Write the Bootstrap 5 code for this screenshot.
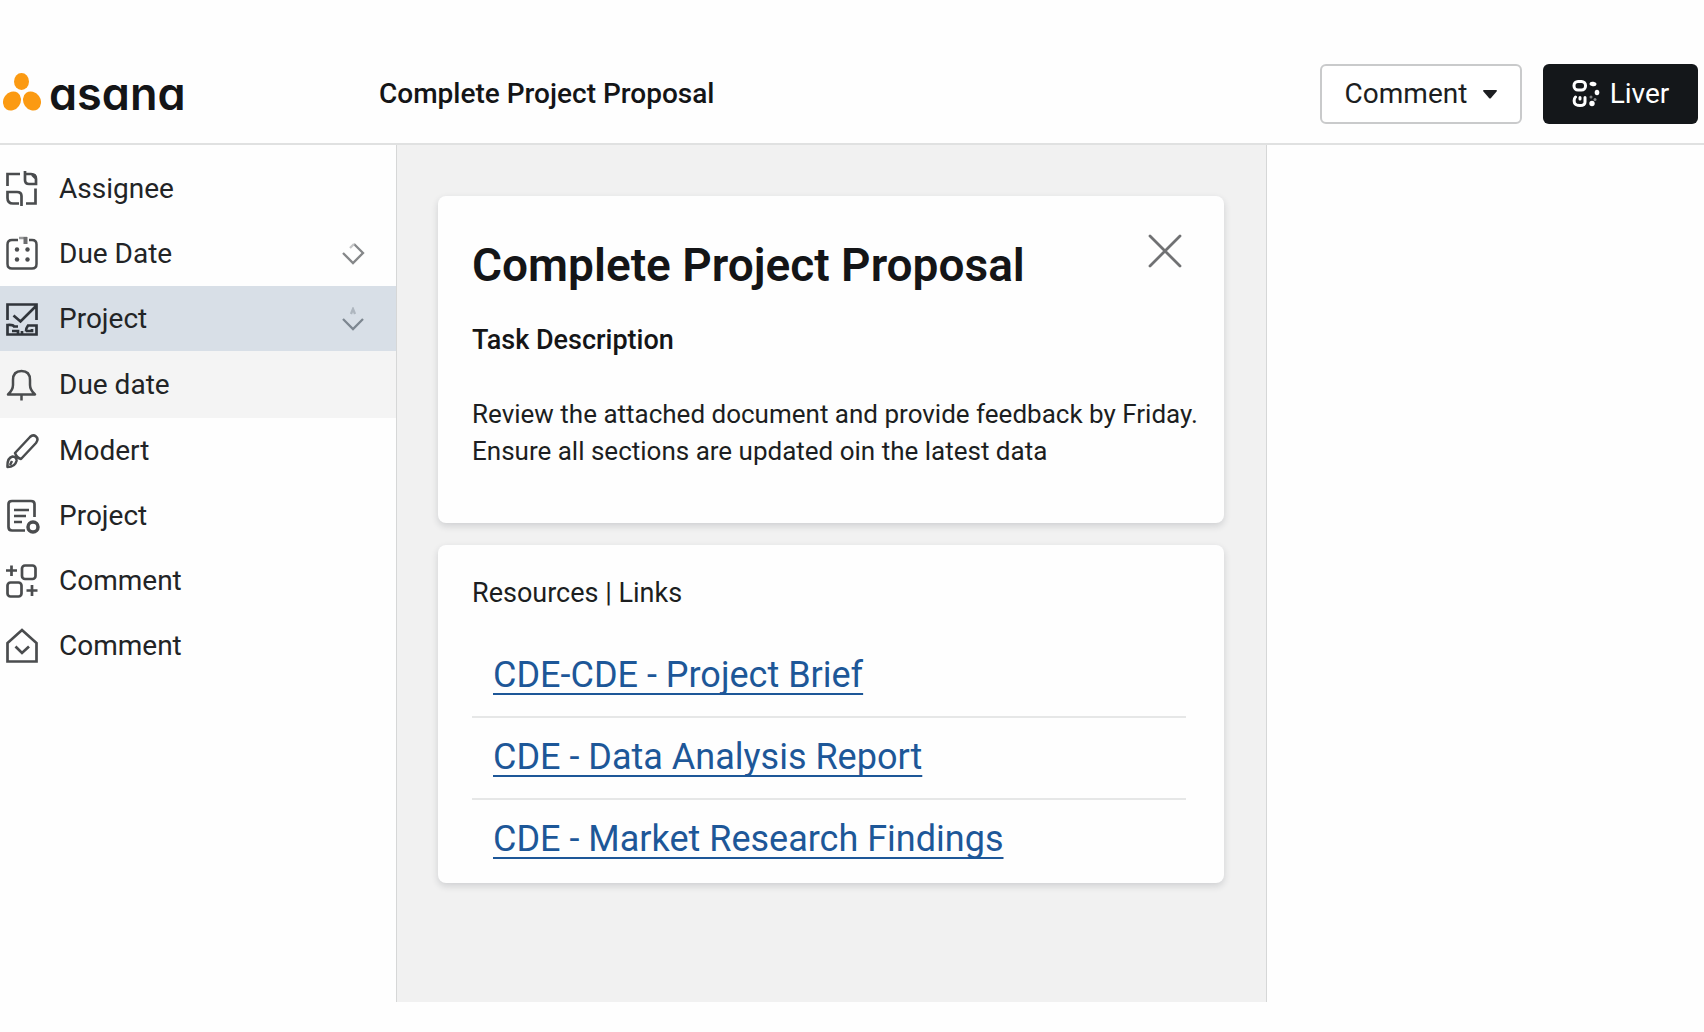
<!DOCTYPE html>
<html lang="en">
<head>
<meta charset="utf-8">
<meta name="viewport" content="width=device-width, initial-scale=1">
<title>Complete Project Proposal</title>
<link href="https://cdn.jsdelivr.net/npm/bootstrap@5.3.0/dist/css/bootstrap.min.css" rel="stylesheet">
<style>
  body { font-family: Roboto, "Liberation Sans", sans-serif; color: #1c1e21; background: #fefefe; }
  .shell { display: grid; grid-template-columns: minmax(0, 397fr) minmax(0, 870fr) minmax(0, 437fr); }
  .topbar { padding-top: 45px; border-bottom: 2px solid #e0e1e1; }
  .topbar-inner { height: 98px; }
  .brand { color: #141517; font: 600 45px/56px Inter, sans-serif; font-feature-settings: "cv11"; gap: 8px; padding-left: 3px; width: 379px; }
  .brand svg { margin-bottom: 4px; }
  .page-name { font-size: 28px; line-height: 36px; font-weight: 500; color: #141517; }
  .actions { gap: 21px; padding-right: 6px; }
  .action { height: 60px; font-size: 28px; line-height: 36px; border-radius: 6px; }
  .action-light { width: 202px; background: #fff; border: 2px solid #c9cacb; color: #1c1e21; }
  .action-dark { width: 155px; background: #14171a; color: #fff; }
  .side-nav { padding-top: 11px; border-right: 1px solid #d6d7d7; }
  .side-link { height: 65px; padding: 0 31px 0 5px; gap: 20px; font-size: 28px; line-height: 36px; color: #222426; text-decoration: none; }
  .side-link svg { flex: none; color: #4a4c4e; }
  .side-link.is-current { background: #d8dfe7; }
  .side-link.is-hovered { background: #f4f4f4; height: 67px; }
  .work { background: #f1f1f1; border-right: 1px solid #d6d7d7; padding: 51px 42px 50px 41px; min-height: calc(100vh - 175px); }
  .panel { background: #fefefe; border: 0; border-radius: 8px; box-shadow: 0 3px 7px rgba(30, 40, 50, .16); }
  .panel-task { padding: 41px 0 53px 34px; margin-bottom: 22px; }
  .panel-title { font-size: 46px; line-height: 56px; font-weight: 600; color: #141517; }
  .panel-sub { font-size: 27px; line-height: 36px; font-weight: 500; margin: 29px 0 38px; color: #141517; }
  .panel-copy { font-size: 26px; line-height: 37px; }
  .close-x { width: 36px; height: 36px; margin: -4px 41px 0 0; color: #707173; }
  .panel-links { padding: 30px 38px 1px 34px; }
  .links-head { font-size: 27px; line-height: 36px; font-weight: 400; margin-bottom: 25px; }
  .res-row { height: 82px; padding: 0 0 2px 21px; border-bottom: 2px solid #e6e7e7; }
  .res-row:last-child { border-bottom-color: transparent; }
  .res-row a { font-size: 36px; line-height: 44px; color: #1d5798; text-decoration: underline; text-decoration-thickness: 2px; text-underline-offset: 6px; text-decoration-skip-ink: none; }
</style>
<script src="https://cdn.jsdelivr.net/npm/bootstrap@5.3.0/dist/js/bootstrap.bundle.min.js"></script>
</head>
<body>
<header class="topbar">
  <div class="topbar-inner d-flex align-items-center">
    <a class="brand d-flex align-items-center text-decoration-none" href="#">
      <svg width="38" height="38" viewBox="0 0 38 38" fill="#fb9a12" aria-hidden="true">
        <ellipse cx="18.500" cy="8.500" rx="7.500" ry="8.500"/>
        <ellipse cx="9" cy="28" rx="8.500" ry="10" transform="rotate(35 9 28)"/>
        <ellipse cx="29" cy="28" rx="8.500" ry="10" transform="rotate(-35 29 28)"/>
      </svg>
      <span>asana</span>
    </a>
    <div class="page-name">Complete Project Proposal</div>
    <div class="actions d-flex ms-auto">
      <button type="button" class="btn action action-light d-flex align-items-center justify-content-center p-0">Comment
        <svg class="ms-3" width="14" height="9" viewBox="0 0 14 9" aria-hidden="true"><path d="M0 1Q0 0 1 0H13Q14 0 14 1L8 8Q7 9 6 8Z" fill="currentColor"/></svg>
      </button>
      <button type="button" class="btn action action-dark d-flex align-items-center justify-content-center p-0">
        <svg class="me-2" width="30" height="30" viewBox="0 0 30 30" fill="none" stroke="currentColor" stroke-width="3" aria-hidden="true">
          <rect x="2" y="2.500" width="11.500" height="8.500" rx="4"/>
          <path d="M3.500 18Q1.500 20 2.500 24Q3.500 26.500 8 26.500Q13 26.500 13 23V18.500M8 18.500V20" stroke-linecap="round"/>
          <g fill="currentColor" stroke="none"><ellipse cx="21" cy="5" rx="3.500" ry="2.200" transform="rotate(10 21 5)"/><ellipse cx="25" cy="13.500" rx="2.300" ry="2.700"/><circle cx="19" cy="18" r="1.500" opacity=".45"/><circle cx="20" cy="24.500" r="2.700"/><circle cx="23" cy="20.500" r="1.500" opacity=".5"/></g>
        </svg>Liver
      </button>
    </div>
  </div>
</header>

<div class="shell">
  <nav class="side-nav" aria-label="Task fields">
    <a class="side-link d-flex align-items-center" href="#">
      <svg width="34" height="36" viewBox="0 0 34 36" fill="none" stroke="currentColor" stroke-width="2.700" aria-hidden="true">
        <path d="M2.500 15V3H15M20 0V9Q20 13 24 13H31V8Q31 3 26 3H20M27 3.500L30.500 7M30.500 17.500V32.500H21M16.500 35V25Q16.500 21 12 21H2.500V27Q2.500 32.500 8 32.500H14"/>
      </svg>Assignee</a>
    <a class="side-link d-flex align-items-center" href="#">
      <svg width="34" height="36" viewBox="0 0 34 36" fill="none" stroke="currentColor" stroke-width="2.500" aria-hidden="true">
        <path d="M13 4H7Q2.500 4 2.500 8.500V28Q2.500 32.500 7 32.500H27Q31.500 32.500 31.500 28V8.500Q31.500 4 27 4H24"/><path d="M14 2H22" stroke="#98999a"/><path d="M20.500 1V8" stroke-width="4" stroke="#6c6d6f"/>
        <g fill="currentColor" stroke="none"><circle cx="12" cy="13.500" r="2.200"/><circle cx="22.500" cy="13.500" r="2.200"/><circle cx="12" cy="23.500" r="2.200"/><circle cx="22.500" cy="23.500" r="2.200"/></g>
      </svg>Due Date
      <svg class="ms-auto" width="24" height="24" viewBox="0 0 24 24" fill="none" stroke="#858789" stroke-width="2.300" aria-hidden="true"><path d="M2 11L12 21L22 11L13 2"/><path d="M13 2L9 6" stroke="#c4c5c6"/></svg></a>
    <a class="side-link is-current d-flex align-items-center" href="#" aria-current="page">
      <svg width="34" height="36" viewBox="0 0 34 36" fill="none" stroke="#30353b" stroke-width="2.700" aria-hidden="true">
        <path d="M2.500 19V3.500H31.500V19M8.500 14.500L15.500 20.500L31 5M13 25.500H9Q8 23.500 2.500 24V33.500H31.500V24.500H23Q21 27 21 30.500M7 30H13V33M17 30V33M21 30H27V28"/>
      </svg>Project
      <svg class="ms-auto" width="24" height="24" viewBox="0 0 24 24" fill="none" stroke="#7d8791" stroke-width="2.300" aria-hidden="true"><path d="M2 12L12 22L22 12"/><path d="M10 7L12 2L14 7" stroke="#aeb6bf"/></svg></a>
    <a class="side-link is-hovered d-flex align-items-center" href="#">
      <svg width="34" height="36" viewBox="0 0 34 36" fill="none" stroke="currentColor" stroke-width="2.500" stroke-linejoin="round" aria-hidden="true">
        <path d="M3 27.500Q8 23 8 18V13Q8 4 16.500 4T25 13V18Q25 23 30 27.500ZM16.500 28V33.500"/>
      </svg>Due date</a>
    <a class="side-link d-flex align-items-center" href="#">
      <svg width="34" height="36" viewBox="0 0 34 36" fill="none" stroke="currentColor" stroke-width="2.500" stroke-linejoin="round" aria-hidden="true">
        <path d="M10 20L25 4Q28 1 31 3.500Q34 6 31 10L16 26Q12 25 10 20ZM2.500 34Q2 25 7.500 23.500Q12 24 11.500 28Q10 34 2.500 34ZM5 32L7 28"/>
      </svg>Modert</a>
    <a class="side-link d-flex align-items-center" href="#">
      <svg width="34" height="36" viewBox="0 0 34 36" fill="none" stroke="currentColor" stroke-width="2.700" overflow="visible" aria-hidden="true">
        <path d="M20 32.500H7Q3.500 32.500 3.500 29V6Q3.500 3 7 3H26Q29.500 3 29.500 6V19M9 12H24M9 18H21M9 24H17"/><circle cx="28" cy="29" r="5" stroke-width="3.500"/>
      </svg>Project</a>
    <a class="side-link d-flex align-items-center" href="#">
      <svg width="34" height="36" viewBox="0 0 34 36" fill="none" stroke="currentColor" stroke-width="2.700" aria-hidden="true">
        <rect x="17" y="2.500" width="13.500" height="13.500" rx="3"/><rect x="2.500" y="19.500" width="14" height="14" rx="3"/>
        <path d="M6.500 2.500V13M1 7.500H12M27 22V33M21.500 27.500H32.500"/>
      </svg>Comment</a>
    <a class="side-link d-flex align-items-center" href="#">
      <svg width="34" height="36" viewBox="0 0 34 36" fill="none" stroke="currentColor" stroke-width="2.700" aria-hidden="true">
        <path d="M2.500 33.500V15L17 2L31.500 15V33.500ZM10.500 18.500L17 25L24 18.500"/>
      </svg>Comment</a>
  </nav>

  <main class="work">
    <section class="card panel panel-task">
      <div class="d-flex justify-content-between">
        <h1 class="panel-title mb-0">Complete Project Proposal</h1>
        <button type="button" class="close-x btn p-0 border-0 d-flex" aria-label="Close">
          <svg width="36" height="36" viewBox="0 0 36 36" fill="none" stroke="currentColor" stroke-width="2.800" stroke-linecap="round" aria-hidden="true"><path d="M3 3L33 33M33 3L3 33"/></svg>
        </button>
      </div>
      <h2 class="panel-sub">Task Description</h2>
      <p class="panel-copy mb-0">Review the attached document and provide feedback by Friday.<br>Ensure all sections are updated oin the latest data</p>
    </section>
    <section class="card panel panel-links">
      <h2 class="links-head">Resources | Links</h2>
      <ul class="list-unstyled mb-0">
        <li class="res-row d-flex align-items-center"><a href="#">CDE-CDE - Project Brief</a></li>
        <li class="res-row d-flex align-items-center"><a href="#">CDE - Data Analysis Report</a></li>
        <li class="res-row d-flex align-items-center"><a href="#">CDE - Market Research Findings</a></li>
      </ul>
    </section>
  </main>
</div>
</body>
</html>
